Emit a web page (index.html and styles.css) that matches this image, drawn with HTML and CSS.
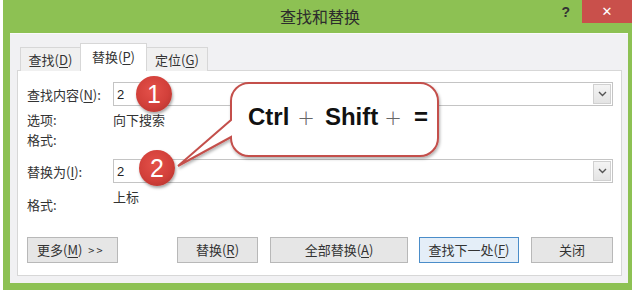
FILE: index.html
```html
<!DOCTYPE html>
<html lang="zh">
<head>
<meta charset="utf-8">
<title>查找和替换</title>
<link rel="stylesheet" href="styles.css">
</head>
<body>
<div class="window">
  <div class="titlebar">
    <span></span>
    <span class="title">查找和替换</span>
    <span class="controls"><span class="help">?</span><span class="close">✕</span></span>
  </div>
  <div class="client">
    <div class="tabs">
      <span class="tab t1">查找(<u>D</u>)</span>
      <span class="tab active t2">替换(<u>P</u>)</span>
      <span class="tab t3">定位(<u>G</u>)</span>
    </div>
    <div class="panel">
      <div class="row r1">
        <span class="label">查找内容(<u>N</u>):</span>
        <div class="combo"><span class="val">2</span><span class="drop"><svg width="9" height="6" viewBox="0 0 9 6"><path d="M1 1 L4.5 4.5 L8 1" fill="none" stroke="#555" stroke-width="1.4"/></svg></span></div>
      </div>
      <div class="info i1"><span class="label">选项:</span><span>向下搜索</span></div>
      <div class="info i2"><span class="label">格式:</span></div>
      <div class="row r2">
        <span class="label">替换为(<u>I</u>):</span>
        <div class="combo"><span class="val">2</span><span class="drop"><svg width="9" height="6" viewBox="0 0 9 6"><path d="M1 1 L4.5 4.5 L8 1" fill="none" stroke="#555" stroke-width="1.4"/></svg></span></div>
      </div>
      <div class="info i3"><span class="label low">格式:</span><span class="high">上标</span></div>
      <div class="buttons">
        <span class="btn more">更多(<u>M</u>) <span class="gt">&gt;&gt;</span></span>
        <span class="btn b-rep">替换(<u>R</u>)</span>
        <span class="btn b-all">全部替换(<u>A</u>)</span>
        <span class="btn b-next">查找下一处(<u>F</u>)</span>
        <span class="btn b-close">关闭</span>
      </div>
    </div>
  </div>
</div>

<svg class="callout" width="640" height="296" viewBox="0 0 640 296">
  <defs>
    <filter id="sh" x="-10%" y="-10%" width="120%" height="130%">
      <feDropShadow dx="1" dy="2" stdDeviation="1.5" flood-color="#000" flood-opacity="0.3"/>
    </filter>
  </defs>
  <path d="M249 83 H420 A18 18 0 0 1 438 101 V138 A18 18 0 0 1 420 156 H249 A18 18 0 0 1 231 138 V137 L178 166 L231 120 V101 A18 18 0 0 1 249 83 Z" fill="#fff" stroke="#c4504c" stroke-width="2" filter="url(#sh)"/>
</svg>
<div class="keys"><b>Ctrl</b><span class="plus">+</span><b>Shift</b><span class="plus p2">+</span><b>=</b></div>
<span class="badge n1">1</span>
<span class="badge n2">2</span>
</body>
</html>
```

FILE: styles.css
```css
html, body {
  margin: 0;
  padding: 0;
}
body {
  width: 640px;
  height: 296px;
  background: #fff;
  position: relative;
  overflow: hidden;
  font-family: "Noto Sans CJK SC", "Liberation Sans", sans-serif;
  font-size: 13px;
  color: #333;
}
u { text-decoration: underline; text-underline-offset: 2px; }

.window {
  margin-left: 3px;
  width: 629px;
  height: 290px;
  background: #8dc153;
  display: flex;
  flex-direction: column;
  box-sizing: border-box;
  padding-bottom: 7px;
}
.titlebar {
  height: 33px;
  display: grid;
  grid-template-columns: 1fr auto 1fr;
  align-items: start;
}
.title {
  font-size: 16px;
  line-height: 32px;
  color: #2c2c2c;
  padding-left: 5px;
}
.controls {
  display: flex;
  justify-content: flex-end;
  align-items: flex-start;
}
.help {
  font-family: "Liberation Sans", sans-serif;
  font-weight: bold;
  font-size: 14px;
  line-height: 24px;
  color: #333;
  margin-right: 12px;
}
.close {
  width: 50px;
  height: 23px;
  background: #c9504b;
  color: #fff;
  font-family: "DejaVu Sans", sans-serif;
  font-size: 13px;
  font-weight: bold;
  line-height: 23px;
  text-align: center;
}
.client {
  flex: 1;
  margin: 0 4px 0 7px;
  background: #f1f1f3;
  padding: 10px 6px 7px 7px;
  display: flex;
  flex-direction: column;
  border-top: 1px solid #fafafa;
  box-sizing: border-box;
}
.tabs {
  display: flex;
  align-items: flex-end;
  padding-left: 3px;
  height: 27px;
  position: relative;
  z-index: 1;
  margin-bottom: -1px;
}
.tab {
  box-sizing: border-box;
  height: 24px;
  border: 1px solid #d7d7d7;
  border-bottom: none;
  background: #f0f0f0;
  text-align: center;
  line-height: 23px;
  color: #333;
}
.t1 { width: 60px; border-right: none; }
.t2 { width: 67px; }
.t3 { width: 61px; border-left: none; }
.tab.active {
  height: 28px;
  background: #fff;
  line-height: 26px;
}
.panel {
  flex: 1;
  background: #fff;
  border: 1px solid #d7d7d7;
  padding: 0 8px 0 9px;
  display: flex;
  flex-direction: column;
}
.row {
  display: flex;
  align-items: center;
}
.r1 { margin-top: 11px; }
.r2 { margin-top: 11px; }
.label {
  width: 86px;
  flex: none;
  color: #333;
}
.combo {
  flex: 1;
  height: 24px;
  box-sizing: border-box;
  border: 1px solid #c4c4c4;
  display: flex;
  align-items: center;
  justify-content: space-between;
}
.val {
  font-family: "Liberation Sans", sans-serif;
  font-size: 13px;
  padding-left: 3px;
  color: #222;
}
.drop {
  width: 18px;
  height: 20px;
  margin-right: 1px;
  box-sizing: border-box;
  border: 1px solid #d0d0d0;
  background: linear-gradient(#f4f4f4, #e4e4e4);
  display: flex;
  align-items: center;
  justify-content: center;
}
.info {
  display: flex;
  line-height: 16px;
}
.i1 { margin-top: 6px; }
.i2 { margin-top: 4px; }
.i3 {
  margin-top: 6px;
  height: 24px;
}
.low { align-self: flex-end; }
.high { align-self: flex-start; }
.buttons {
  margin-top: 24px;
  display: flex;
  gap: 12px;
}
.btn {
  box-sizing: border-box;
  height: 26px;
  border: 1px solid #b8b8b8;
  background: #e6e6e6;
  text-align: center;
  line-height: 24px;
  color: #333;
}
.gt {
  font-size: 11px;
  letter-spacing: 2px;
  margin-left: 3px;
}
.more { width: 91px; margin-right: auto; text-align: left; padding-left: 9px; }
.b-rep { width: 81px; }
.b-all { width: 138px; }
.b-next {
  width: 100px;
  margin-left: -1px;
  border-color: #4b8dc9;
  background: #e4eef8;
}
.b-close { width: 82px; }

.callout {
  position: absolute;
  left: 0;
  top: 0;
  pointer-events: none;
}
.keys {
  position: absolute;
  left: 248px;
  top: 103px;
  display: flex;
  align-items: baseline;
  font-family: "Liberation Sans", Arial, sans-serif;
  font-size: 24px;
  line-height: 28px;
  color: #111;
}
.keys b { font-weight: bold; }
.plus {
  font-family: "DejaVu Sans", sans-serif;
  font-weight: 300;
  font-size: 21px;
  color: #666;
  margin: 0 10px 0 8px;
}
.plus.p2 { margin: 0 12px 0 6px; }
.badge {
  position: absolute;
  width: 36px;
  height: 36px;
  border-radius: 50%;
  background: radial-gradient(circle at 45% 40%, #e4514a 0%, #d2403a 55%, #a8302b 100%);
  box-shadow: 1px 2px 3px rgba(0,0,0,0.35);
  color: #fff;
  font-family: "Liberation Sans", Arial, sans-serif;
  font-size: 25px;
  line-height: 36px;
  text-align: center;
}
.n1 { left: 136px; top: 76px; }
.n2 { left: 139px; top: 150px; }
```
